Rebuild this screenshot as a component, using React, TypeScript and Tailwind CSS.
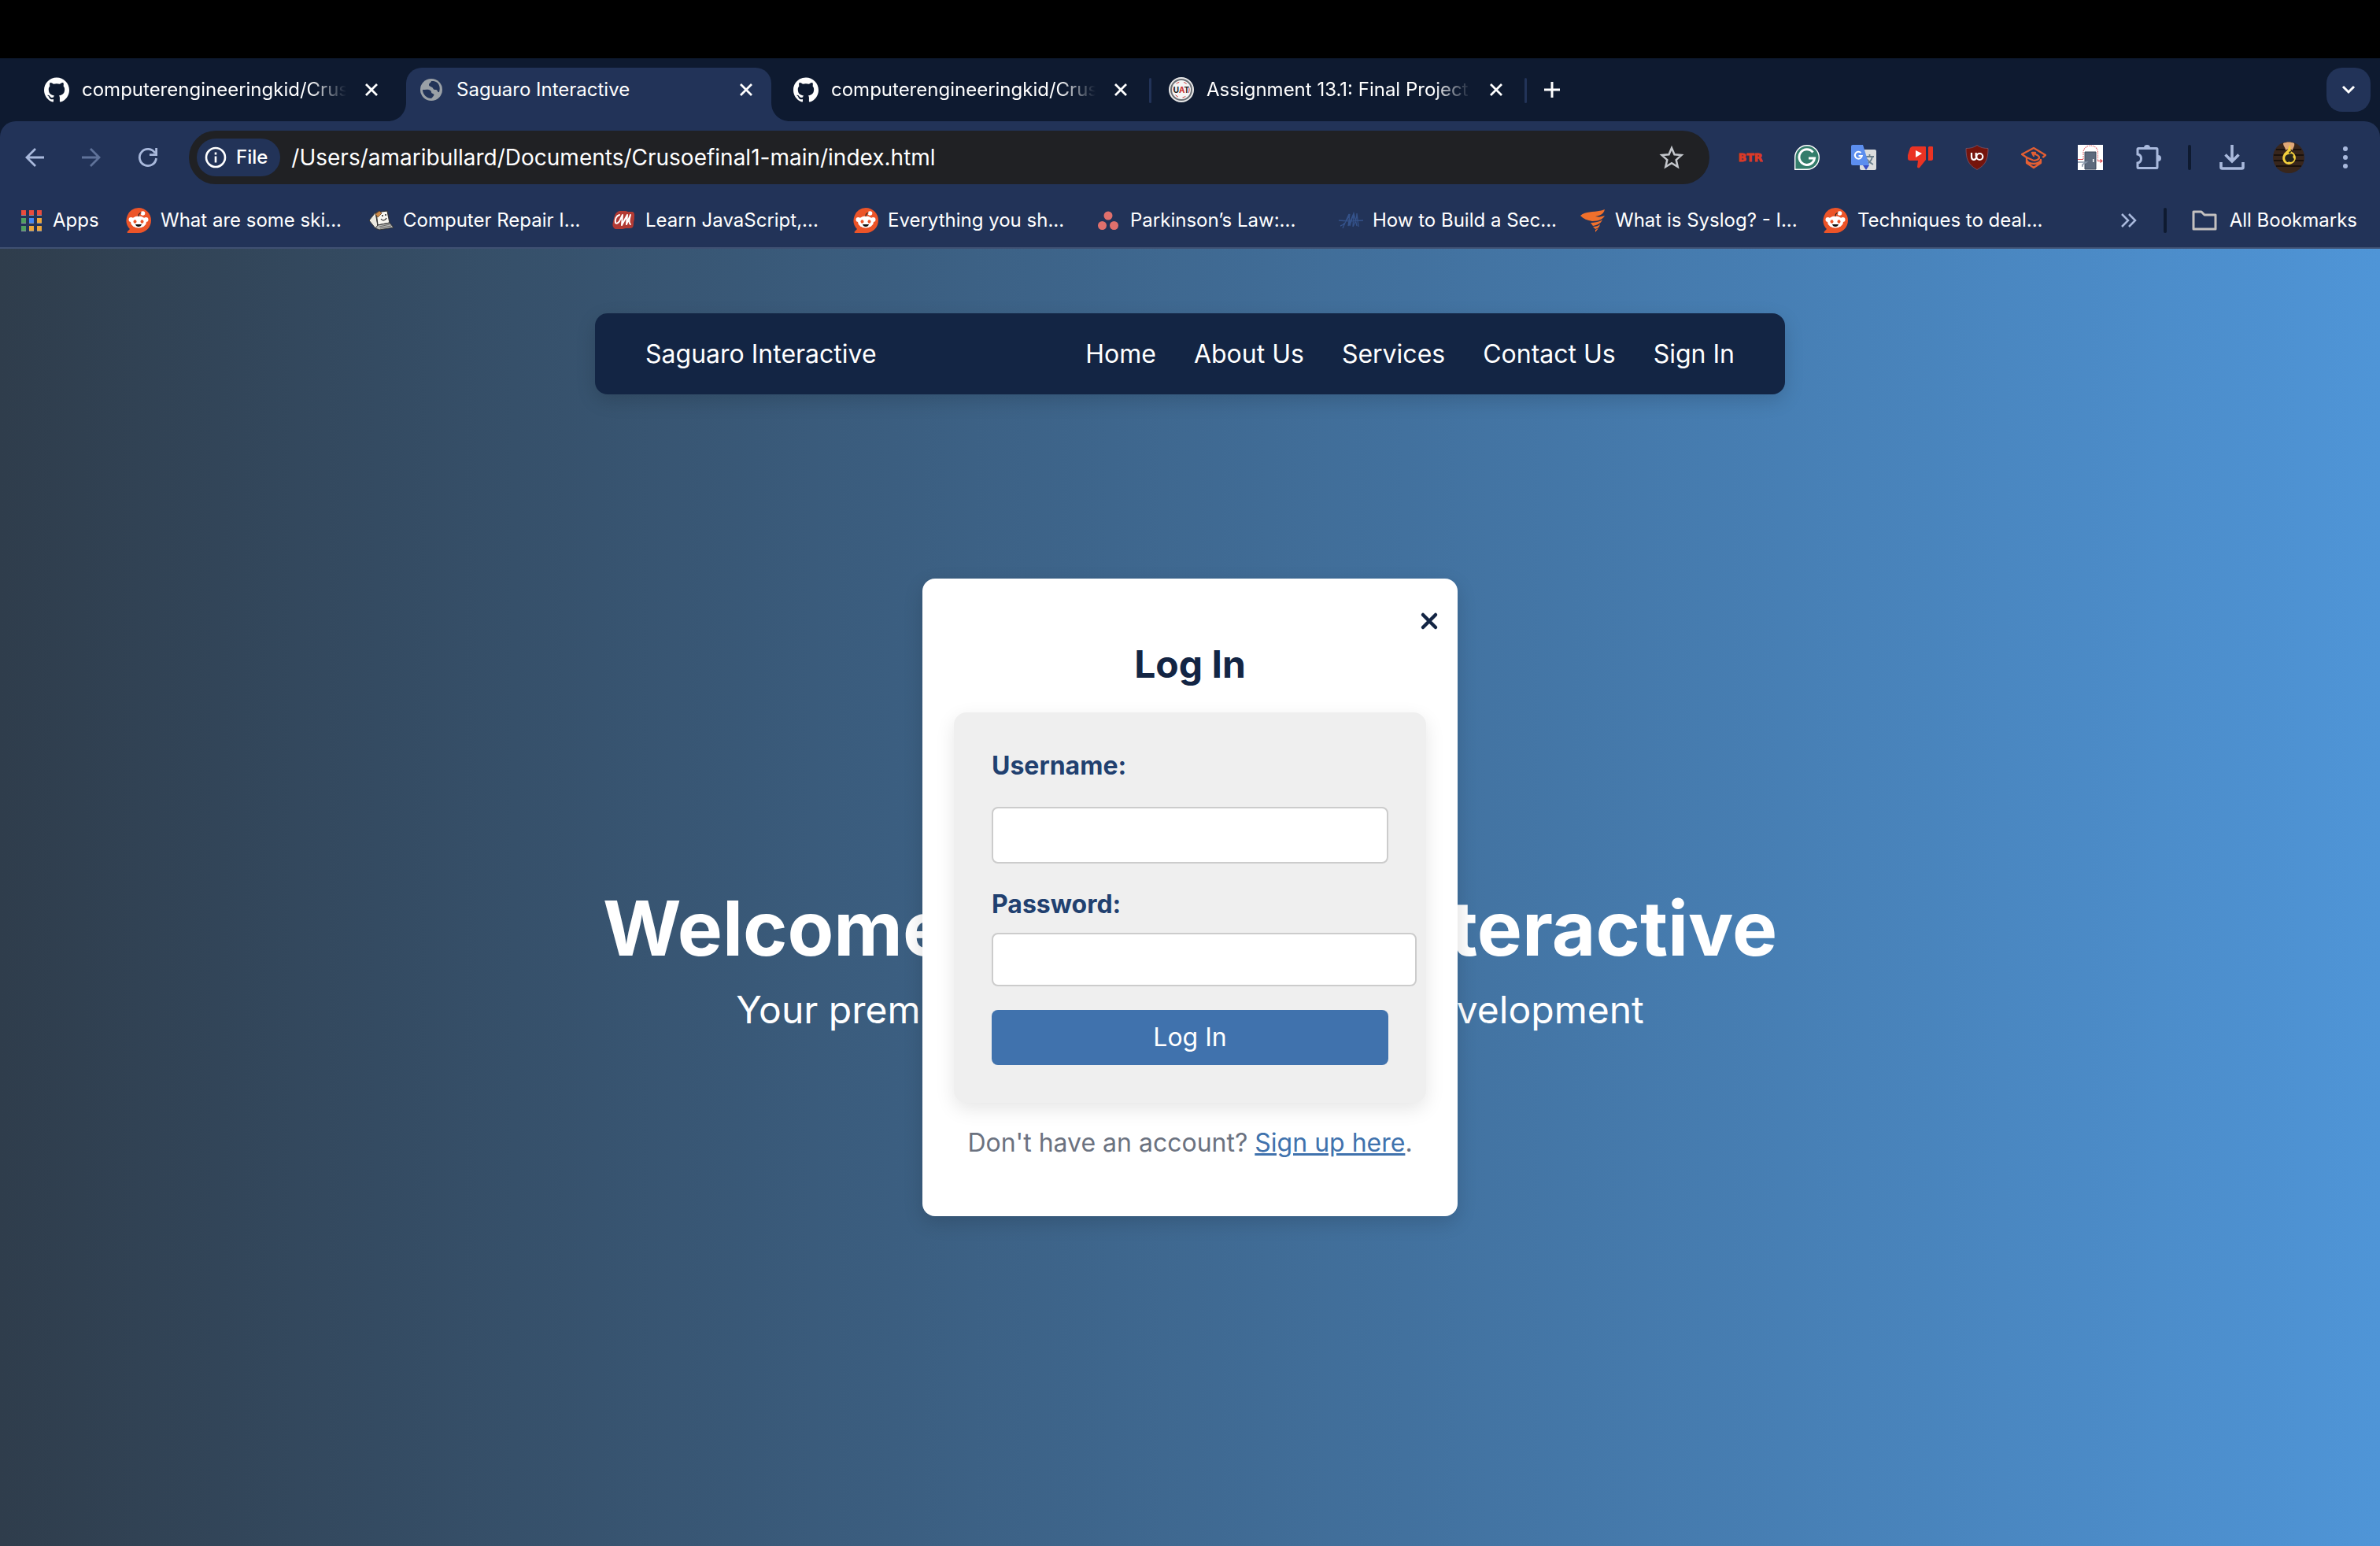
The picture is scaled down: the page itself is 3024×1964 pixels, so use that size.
import React from "react";
import { SiGithub } from "react-icons/si";

const REDDIT = (
  <svg viewBox="0 0 32 32" className="size-8 shrink-0">
    <path d="M16 0a16 16 0 1 1 0 32H3c-1.500 0-1.800-1-1-2l3-3A16 16 0 0 1 16 0z" fill="#ec5428" />
    <circle cx="6.500" cy="15" r="3" fill="#fff" />
    <circle cx="25.500" cy="15" r="3" fill="#fff" />
    <ellipse cx="16" cy="18" rx="10" ry="7.500" fill="#fff" />
    <circle cx="21.500" cy="7" r="2.800" fill="#fff" />
    <path d="M16 11c0-3 1.500-4.500 3.500-4.500" stroke="#222" strokeWidth="1.200" fill="none" />
    <ellipse cx="11.500" cy="17.500" rx="2" ry="2.300" fill="#ec5428" />
    <ellipse cx="20.500" cy="17.500" rx="2" ry="2.300" fill="#ec5428" />
    <path d="M12 21h8c-.5 2-2 3-4 3s-3.500-1-4-3z" fill="#111" />
  </svg>
);

const APP_COLORS = ["#e84c3d", "#e84c3d", "#e84c3d", "#4f9f60", "#4285f4", "#eda63a", "#4f9f60", "#eda63a", "#eda63a"];

const APPS = (
  <svg viewBox="0 0 26 27" className="h-[27px] w-[26px] shrink-0">
    {APP_COLORS.map((c, i) => (
      <g key={i}>
        <rect x={(i % 3) * 10} y={Math.floor(i / 3) * 10} width="6" height="7" fill="#8d93a1" />
        <rect x={(i % 3) * 10} y={Math.floor(i / 3) * 10} width="6" height="6" fill={c} />
      </g>
    ))}
  </svg>
);

const COMPUTER = (
  <svg viewBox="0 0 32 32" className="size-8 shrink-0">
    <path d="M1 16L9 6l3 17-3 3z" fill="#ece9e0" stroke="#333" strokeWidth="1" />
    <path d="M10 6l14-2 3 15-15 3z" fill="#f8f6f0" stroke="#333" strokeWidth="1.200" />
    <path d="M9 8l5-4 3 3-5 5z" fill="#c98a4b" stroke="#6b4220" strokeWidth=".8" />
    <circle cx="18" cy="10" r="1" fill="#222" />
    <circle cx="22" cy="9" r="1" fill="#222" />
    <path d="M16 14c2 3 6 2 7-1" stroke="#222" strokeWidth="1.200" fill="none" />
    <path d="M12 22l15-3 5 6-18 3-5-2z" fill="#b9b9b5" stroke="#333" strokeWidth="1" />
    <path d="M14 24l13-3M15 26l14-3" stroke="#666" strokeWidth="1" />
  </svg>
);

const MASTERY = (
  <svg viewBox="0 0 32 32" className="size-8 shrink-0">
    <path d="M11 4h8l3 1h6c3 2 2 5 2 8s-1 4-1 7-1 6-4 6h-6l-4 1H6c-4-2-4-6-3-9s1-12 8-14z" fill="#b23a34" />
    <path d="M11 9c-4 1-6 6-5 10 2 2 5-1 6-4l3-6-1 13 7-13-1 12 5-12c-1 4-3 10 0 12" stroke="#fff" strokeWidth="2" fill="none" strokeLinecap="round" strokeLinejoin="round" />
  </svg>
);

const ASANA = (
  <svg viewBox="0 0 32 32" className="size-8 shrink-0" fill="#e0706c">
    <circle cx="16" cy="10" r="5.500" />
    <circle cx="8.500" cy="22.500" r="5.500" />
    <circle cx="23.500" cy="22.500" r="5.500" />
  </svg>
);

const PEAKS = (
  <svg viewBox="0 0 32 32" className="size-8 shrink-0" fill="none" stroke="#34528a" strokeWidth="1.300">
    <path d="M1 16c8 1 20 1 31 0M6 26L14 8l1 15 5-16 4 16M3 23c6-1 10-10 12-15l-2 15 7-16-1 17c3-5 5-12 5-17l2 17" />
  </svg>
);

const SOLAR = (
  <svg viewBox="0 0 32 32" className="size-8 shrink-0" fill="#f0702c">
    <path d="M0 10C8 3 18 7 31 2c-1 5-5 8-12 9 5 1 8 0 12-1-3 5-8 7-16 7C9 16 4 14 0 10z" />
    <path d="M13 19c6 0 11-1 15-4-2 5-6 7-12 8zM16 24c4 0 7-1 9-3-1 4-3 5-6 6zM19 28l4-2-4 5z" />
  </svg>
);

const bookmarks = [
  { icon: REDDIT, label: "What are some ski..." },
  { icon: COMPUTER, label: "Computer Repair I..." },
  { icon: MASTERY, label: "Learn JavaScript,..." },
  { icon: REDDIT, label: "Everything you sh..." },
  { icon: ASANA, label: "Parkinson’s Law:..." },
  { icon: PEAKS, label: "How to Build a Sec..." },
  { icon: SOLAR, label: "What is Syslog? - I..." },
  { icon: REDDIT, label: "Techniques to deal..." },
];

function Cross() {
  return (
    <svg viewBox="0 0 16 16" className="size-4" stroke="currentColor" strokeWidth="2.800" fill="none">
      <path d="M1 1l14 14M15 1L1 15" />
    </svg>
  );
}

function Globe() {
  return (
    <svg viewBox="0 0 28 28" className="size-7" fill="none">
      <circle cx="14" cy="14" r="14" fill="#9aa0a6" />
      <path d="M3 14c3 0 8-1 10 1s0 3 3 4 1 3-2 6c-6 0-11-5-11-11zM14 3c-1 3-3 2-3 5 0 2 4 2 5 4s2 2 4 2 2 4 4 3c2-6 0-13-7-14z" fill="#223358" />
    </svg>
  );
}

function Uat() {
  return (
    <svg viewBox="0 0 32 32" className="size-8">
      <circle cx="16" cy="16" r="15" fill="#6a6e74" stroke="#e8e8e8" strokeWidth="2" />
      <circle cx="16" cy="16" r="12" fill="#f5f5f5" />
      <circle cx="16" cy="16" r="10" fill="none" stroke="#c33" strokeWidth="1" strokeDasharray="4 6" />
      <text x="16" y="20" textAnchor="middle" fontSize="10" fontWeight="700" fontFamily="Inter, sans-serif" fill="#222">U<tspan fill="#c33">A</tspan>T</text>
    </svg>
  );
}

type TabProps = { icon: React.ReactNode; title: string; active?: boolean; fade?: boolean };

function Tab({ icon, title, active, fade }: TabProps) {
  return (
    <div className={"relative flex h-[68px] w-[464px] items-center pr-6 pb-3 pl-4 " + (active ? "rounded-t-[20px] bg-[#223358]" : "")}>
      {active && (
        <>
          <svg viewBox="0 0 24 24" className="absolute bottom-0 -left-6 size-6" fill="#223358"><path d="M24 0v24H0C14 24 24 14 24 0z" /></svg>
          <svg viewBox="0 0 24 24" className="absolute -right-6 bottom-0 size-6" fill="#223358"><path d="M0 0v24h24C10 24 0 14 0 0z" /></svg>
        </>
      )}
      <span className="flex w-8 shrink-0 justify-center">{icon}</span>
      <span className={"ml-4 min-w-0 flex-1 overflow-hidden text-2xl whitespace-nowrap " + (fade ? "[mask-image:linear-gradient(to_right,#000_86%,transparent)]" : "")}>{title}</span>
      <button aria-label="Close tab" className="ml-6"><Cross /></button>
    </div>
  );
}

const extensions = [
  {
    name: "BTR",
    icon: (
      <svg viewBox="0 0 32 32" className="size-8">
        <text x="16" y="21" textAnchor="middle" fontSize="14" fontWeight="700" fontFamily="DejaVu Sans, sans-serif" fill="#dc3a26" stroke="#dc3a26" strokeWidth=".8">BTR</text>
      </svg>
    ),
  },
  {
    name: "Grammar",
    icon: (
      <svg viewBox="0 0 32 32" className="size-8">
        <path d="M16 .7a15.300 15.300 0 1 1 0 30.600H.7V16A15.300 15.300 0 0 1 16 .7z" fill="#347d6b" stroke="#fff" strokeWidth="1.400" />
        <path d="M23.500 9.500A9.800 9.800 0 1 0 25.500 17H18" stroke="#fff" strokeWidth="3" fill="none" />
      </svg>
    ),
  },
  {
    name: "Translate",
    icon: (
      <svg viewBox="0 0 32 32" className="size-8">
        <rect x="11" y="6" width="21" height="26" rx="2" fill="#dcdddd" />
        <path d="M18 15h11M23.500 12v3M27 15c-1 5-4 8-8 10M20 18c2 3 4 5 8 7" stroke="#6b7f8c" strokeWidth="1.800" fill="none" />
        <path d="M15 26h8l-4 6z" fill="#3a4fc4" />
        <path d="M2 0h13l8 26H2a2 2 0 0 1-2-2V2a2 2 0 0 1 2-2z" fill="#5c8eee" />
        <path d="M12.500 10a4.500 4.500 0 1 0 1.300 4H9.500" stroke="#fff" strokeWidth="2" fill="none" />
      </svg>
    ),
  },
  {
    name: "Dislikes",
    icon: (
      <svg viewBox="0 0 32 32" className="size-8" fill="#ea3323">
        <path d="M6 2h16c1 0 1 1 1 1v16l-8 10c-1 1-3 0-3-1l1-8H3c-2 0-3-1-3-3v-4L3 4c1-1 2-2 3-2zM27 2h4c1 0 1 1 1 1v15c0 1-1 2-2 2h-4V3z" />
        <path d="M10 7l8 4-8 5z" fill="#fff" />
      </svg>
    ),
  },
  {
    name: "Blocker",
    icon: (
      <svg viewBox="0 0 32 32" className="size-8">
        <path d="M16 .5c4 3 9 4 14 4C30 17 28 25 16 31.500 4 25 2 17 2 4.500c5 0 10-1 14-4z" fill="#75140c" stroke="#7d5468" strokeWidth=".8" />
        <path d="M9 10v5c0 5 5 5 6 1M14.700 10v5" stroke="#fff" strokeWidth="2.200" fill="none" />
        <circle cx="19.300" cy="15" r="4" stroke="#fff" strokeWidth="2.200" fill="none" />
      </svg>
    ),
  },
  {
    name: "Scholar",
    icon: (
      <svg viewBox="0 0 32 32" className="size-8" fill="none" stroke="#e45f33" strokeWidth="2.300" strokeLinejoin="round" strokeLinecap="round">
        <path d="M28 15.500l3-2.500L16 4 1 12l6 4 8 3.500c4 1 8-1 8-3.500s-3-3-7-5M14 10l2 4M14 10h4" />
        <path d="M7 16v7l9 6 9-6v-4M7 19c1 4 5 5 9 5s7-1 9-4" />
      </svg>
    ),
  },
  {
    name: "Door",
    icon: (
      <svg viewBox="0 0 32 32" className="size-8">
        <rect width="32" height="32" fill="#fff" />
        <path d="M9 31V9h14v22z" fill="#5d6a7d" stroke="#3e4a5c" strokeWidth="1" />
        <path d="M7 18V10C7-2 25.500-2 25.500 10v10" fill="none" stroke="#e0686e" strokeWidth="1.200" strokeDasharray="1.500 1" />
        <path d="M0 18.500h7M25 20.500h6M28.500 18.500l2.500 2-2.500 2" fill="none" stroke="#d8484e" strokeWidth="1.200" />
        <path d="M0 22h11l-5 3v2H5" stroke="#8896a8" strokeWidth="1.500" fill="none" />
        <rect x="19" y="18" width="1.500" height="4" fill="#fff" />
      </svg>
    ),
  },
  {
    name: "Extensions",
    icon: (
      <svg viewBox="0 0 32 32" className="ml-0.5 size-8" fill="none">
        <path d="M3 4.500h23a1 1 0 0 1 1 1v23a1 1 0 0 1-1 1H3a1 1 0 0 1-1-1V23c6-1 6-10 0-11V5.500a1 1 0 0 1 1-1z" stroke="#a9b9dc" strokeWidth="3" />
        <path d="M10 4a4 4 0 0 1 8 0zM28 13a4 4 0 0 1 0 8z" fill="#a9b9dc" />
      </svg>
    ),
  },
];

function Browser() {
  return (
    <header className="bg-[#0e1a30] pt-3 text-white">
      <div className="flex items-start">
        <div className="flex flex-1 pl-10">
          <div className="mr-3"><Tab icon={<SiGithub size={32} />} title="computerengineeringkid/Crusoefinal1" fade /></div>
          <div className="mr-3"><Tab icon={<Globe />} title="Saguaro Interactive" active /></div>
          <Tab icon={<SiGithub size={32} />} title="computerengineeringkid/Crusoefinal1" fade />
          <span className="mt-[13px] mr-1.5 ml-1 h-8 w-[3px] rounded bg-[#223358]" />
          <Tab icon={<Uat />} title="Assignment 13.1: Final Project" fade />
          <span className="mt-[13px] ml-1 h-8 w-[3px] rounded bg-[#223358]" />
          <button aria-label="New tab" className="mt-4 ml-5 size-6">
            <svg viewBox="0 0 24 24" stroke="#fff" strokeWidth="3"><path d="M12 2v20M2 12h20" /></svg>
          </button>
        </div>
        <button aria-label="Search tabs" className="mr-3 grid size-14 place-items-center rounded-[20px] bg-[#223358]">
          <svg viewBox="0 0 18 12" className="w-[18px]" stroke="#fff" strokeWidth="3" fill="none"><path d="M2 2l7 7 7-7" /></svg>
        </button>
      </div>
      <div className="rounded-t-[20px] bg-[#223358]">
        <div className="flex h-[92px] items-center">
          <div className="flex items-center gap-10 pl-7 text-[#a9b9dc]">
            <button aria-label="Back"><svg viewBox="0 0 32 32" className="size-8" stroke="currentColor" strokeWidth="2.800" fill="none"><path d="M28 16H6M17 5L6 16l11 11" /></svg></button>
            <button aria-label="Forward" className="text-[#5f7299]"><svg viewBox="0 0 32 32" className="size-8" stroke="currentColor" strokeWidth="2.800" fill="none"><path d="M4 16h22M15 5l11 11-11 11" /></svg></button>
            <button aria-label="Reload"><svg viewBox="0 0 32 32" className="size-8" stroke="currentColor" strokeWidth="2.800" fill="none"><path d="M25 10.500A10.600 10.600 0 1 0 26.500 17M26.600 4v8.600H18" /></svg></button>
          </div>
          <div className="ml-9 flex h-[68px] flex-1 items-center rounded-full bg-[#202124] pr-8 pl-2.5">
            <button className="flex h-12 items-center gap-3 rounded-full bg-[#223358] pr-4 pl-2.5 text-2xl font-medium">
              <svg viewBox="0 0 28 28" className="size-7" stroke="#fff" strokeWidth="2.600" fill="none"><circle cx="14" cy="14" r="12" /><path d="M14 12.500v8M14 7.500v3" /></svg>
              File
            </button>
            <input aria-label="Address" defaultValue="/Users/amaribullard/Documents/Crusoefinal1-main/index.html" className="ml-3.5 min-w-0 flex-1 bg-transparent text-[28px] outline-none" />
            <button aria-label="Bookmark this page">
              <svg viewBox="0 0 32 32" className="size-8" stroke="#c4c7cc" strokeWidth="2.500" fill="none"><path d="M16 4l3.500 8.300 9 .8-6.800 6 2 8.900-7.700-4.700L8.300 28l2-8.900-6.800-6 9-.8z" /></svg>
            </button>
          </div>
          <div className="flex items-center gap-10 pl-9">
            {extensions.map((e) => (
              <button key={e.name} aria-label={e.name}>{e.icon}</button>
            ))}
          </div>
          <span className="ml-8.5 h-8 w-1 rounded bg-[#0e1a30]" />
          <button aria-label="Downloads" className="ml-9">
            <svg viewBox="0 0 32 32" className="size-8" stroke="#a9b9dc" strokeWidth="3.600" fill="none"><path d="M16 0v21M7.500 12.500L16 21l8.500-8.500M2 22v6.500a1.500 1.500 0 0 0 1.500 1.500h25a1.500 1.500 0 0 0 1.500-1.500V22" /></svg>
          </button>
          <button aria-label="Profile" className="ml-9">
            <svg viewBox="0 0 40 40" className="size-10">
              <circle cx="20" cy="20" r="20" fill="#38261c" />
              <path d="M4 10h32M1 17h38M1 24h38M4 31h32" stroke="#1a110c" strokeWidth="2" />
              <path d="M13 2c4-2 10-2 14 0 1 4-2 6-2 9-3-2-7-2-9 0 0-4-3-5-3-9z" fill="#e0a878" />
              <path d="M21 4c3 4 0 7 3 9 8 4 6 15-4 16-9-1-10-11-4-16 3-2 4-5 5-9z" fill="#f4cf3c" />
              <path d="M20 16c2-1 5-1 6 1-1 2-1 3 1 5-1 3-3 4-5 4-2-1-2 0-4 0-4-3-4-9 2-10zM20 15c0-2 1-3 3-3 0 2-1 3-3 3z" fill="#24241f" />
            </svg>
          </button>
          <button aria-label="Menu" className="mr-10 ml-12"><svg viewBox="0 0 8 28" className="h-7 w-2" fill="#a9b9dc"><circle cx="4" cy="3" r="3" /><circle cx="4" cy="14" r="3" /><circle cx="4" cy="25" r="3" /></svg></button>
        </div>
        <nav aria-label="Bookmarks" className="flex h-[70px] items-center border-b-2 border-[#3f5072] pl-[27px] text-2xl">
          <a href="#" className="flex w-[133px] items-center gap-3.5">{APPS}Apps</a>
          {bookmarks.map((b) => (
            <a key={b.label} href="#" className="flex w-[308px] items-center gap-3 whitespace-nowrap">{b.icon}{b.label}</a>
          ))}
          <button aria-label="More bookmarks" className="ml-auto"><svg viewBox="0 0 20 20" className="size-5" stroke="#a9b9dc" strokeWidth="2.500" fill="none"><path d="M1 2l8 8-8 8M10 2l8 8-8 8" /></svg></button>
          <span className="ml-8.5 h-8 w-1 rounded bg-[#0e1a30]" />
          <a href="#" className="mr-[29px] ml-8 flex items-center gap-4"><svg viewBox="0 0 32 28" className="h-7 w-8" stroke="#c4c1bf" strokeWidth="3" fill="none" strokeLinejoin="round"><path d="M2 3h10l4 4h14v18H2z" /></svg>All Bookmarks</a>
        </nav>
      </div>
    </header>
  );
}

function LoginDialog() {
  return (
    <section role="dialog" aria-labelledby="login-title" className="relative w-[680px] rounded-2xl bg-white px-10 pt-20 pb-[70px] shadow-[0_8px_24px_rgba(0,0,0,0.15)]">
      <button aria-label="Close" className="absolute top-[42px] right-6 text-[#132544]">
        <svg viewBox="0 0 24 24" className="size-6" stroke="currentColor" strokeWidth="4.500" fill="none" strokeLinecap="round"><path d="M4 4l16 16M20 4L4 20" /></svg>
      </button>
      <h2 id="login-title" className="mb-8 text-center text-5xl leading-[58px] font-bold text-[#132544]">Log In</h2>
      <form className="flex flex-col rounded-2xl bg-[#efefef] p-12 text-[32px] leading-10 shadow-[0_8px_24px_rgba(0,0,0,0.1)]">
        <label htmlFor="username" className="font-bold text-[#21406f]">Username:</label>
        <input id="username" type="text" className="mt-8 h-[72px] rounded-lg border-2 border-[#ccc] bg-white px-4" />
        <label htmlFor="password" className="mt-8 font-bold text-[#21406f]">Password:</label>
        <input id="password" type="password" className="mt-4 -mr-9 h-[68px] rounded-lg border-2 border-[#ccc] bg-white px-4" />
        <button type="button" className="mt-[30px] h-[70px] rounded-lg bg-[#4072ad] text-white">Log In</button>
      </form>
      <p className="mt-7 text-center text-[32px] leading-[46px] whitespace-nowrap text-[#6b7280]">
        Don't have an account? <a href="#" className="text-[#4072ad] underline">Sign up here</a>.
      </p>
    </section>
  );
}

export default function App() {
  return (
    <div className="flex min-h-screen flex-col bg-black pt-[74px] font-['Inter',sans-serif]">
      <Browser />
      <div className="relative flex flex-1 flex-col items-center bg-[linear-gradient(to_right,#2f3d4c,#4f95d7)] text-white">
        <nav className="mt-[82px] flex h-[103px] w-1/2 items-center rounded-2xl bg-[#132544] px-16 text-[32px] shadow-[0_8px_24px_rgba(0,0,0,0.15)]">
          <span className="flex-1">Saguaro Interactive</span>
          <div className="flex gap-12">
            <a href="#">Home</a>
            <a href="#">About Us</a>
            <a href="#">Services</a>
            <a href="#">Contact Us</a>
            <a href="#">Sign In</a>
          </div>
        </nav>
        <main className="flex flex-1 flex-col items-center justify-center pb-5 text-center">
          <h1 className="mb-6 text-8xl leading-24 font-bold">Welcome to Saguaro Interactive</h1>
          <p className="text-5xl leading-16">Your premier partner in web software development</p>
        </main>
        <div className="absolute inset-0 flex items-center justify-center">
          <LoginDialog />
        </div>
      </div>
    </div>
  );
}
